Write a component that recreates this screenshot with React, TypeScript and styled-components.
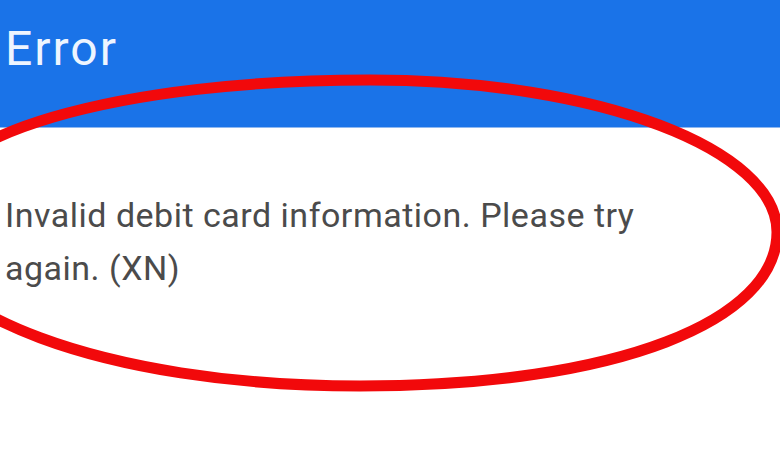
import styled, { createGlobalStyle } from "styled-components";

const GlobalStyle = createGlobalStyle`
  * {
    box-sizing: border-box;
  }
  html, body {
    margin: 0;
    padding: 0;
    background: #ffffff;
  }
  body {
    font-family: Roboto, "Noto Sans", sans-serif;
  }
`;

const Screen = styled.div`
  position: relative;
  width: 780px;
  height: 470px;
  overflow: hidden;
  background: #ffffff;
`;

const AppBar = styled.header`
  height: 128px;
  background: #1a73e8;
  border-bottom: 1px solid #8fb8f0;
  padding: 25px 0 0 5px;
`;

const Title = styled.h1`
  margin: 0;
  font-size: 48px;
  line-height: 48px;
  font-weight: 400;
  letter-spacing: 2px;
  color: #eef5ff;
`;

const Body = styled.main`
  padding: 61px 0 0 5px;
`;

const Message = styled.p`
  margin: 0;
  width: 700px;
  font-size: 34px;
  line-height: 53px;
  letter-spacing: 0.5px;
  color: #4b4b4b;
`;

const Annotation = styled.svg`
  position: absolute;
  inset: 0;
  pointer-events: none;
`;

function App() {
  return (
    <Screen>
      <GlobalStyle />
      <AppBar>
        <Title>Error</Title>
      </AppBar>
      <Body>
        <Message>Invalid debit card information. Please try again. (XN)</Message>
      </Body>
      <Annotation width="780" height="470" viewBox="0 0 780 470">
        <path
          d="M 370 80 C 600 80, 777 150, 777 232 C 777 320, 620 386, 360 386 C 100 386, -85 310, -85 228 C -85 130, 130 80, 370 80 Z"
          fill="none"
          stroke="#f2090b"
          strokeWidth="11"
        />
      </Annotation>
    </Screen>
  );
}

export default App;
